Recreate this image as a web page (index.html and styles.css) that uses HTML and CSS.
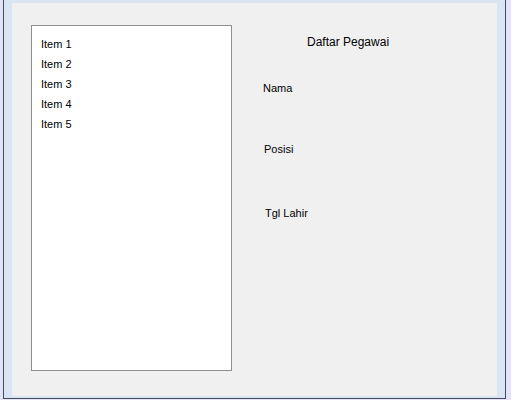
FILE: index.html
```html
<!DOCTYPE html>
<html>
<head>
<meta charset="utf-8">
<link rel="stylesheet" href="styles.css">
</head>
<body>
<div class="screen">
  <div class="window">
    <div class="content">
      <ul class="list">
        <li>Item 1</li>
        <li>Item 2</li>
        <li>Item 3</li>
        <li>Item 4</li>
        <li>Item 5</li>
      </ul>
      <div class="form">
        <div class="title">Daftar Pegawai</div>
        <div class="label nama">Nama</div>
        <div class="label posisi">Posisi</div>
        <div class="label tgl">Tgl Lahir</div>
      </div>
    </div>
  </div>
</div>
</body>
</html>
```

FILE: styles.css
```css
html, body {
  margin: 0;
  padding: 0;
  background: #ffffff;
}
body {
  font-family: "Liberation Sans", Arial, sans-serif;
  font-size: 11px;
  color: #000;
}
.screen {
  width: 511px;
  height: 400px;
  box-sizing: border-box;
  background: #e4e2f8;
  padding: 0 5px 1px 3px;
  display: flex;
}
.window {
  flex: 1;
  border: 1px solid #444c5c;
  border-top: none;
  background: #d9e5f3;
  padding: 3px 8px 2px 8px;
  display: flex;
}
.content {
  flex: 1;
  background: #f0f0f0;
  display: flex;
  align-items: flex-start;
}
.list {
  list-style: none;
  margin: 22px 0 0 19px;
  padding: 8px 0 0 9px;
  width: 190px;
  height: 336px;
  background: #fff;
  border: 1px solid #8e8f8f;
}
.list li {
  height: 20px;
  line-height: 20px;
}
.form {
  display: flex;
  flex-direction: column;
  align-items: flex-start;
  padding: 31px 0 0 31px;
}
.title {
  font-size: 12px;
  line-height: 16px;
  margin-left: 44px;
}
.label {
  line-height: 16px;
}
.nama {
  margin-top: 30px;
}
.posisi {
  margin-top: 45px;
  margin-left: 1px;
}
.tgl {
  margin-top: 48px;
  margin-left: 2px;
}
```
